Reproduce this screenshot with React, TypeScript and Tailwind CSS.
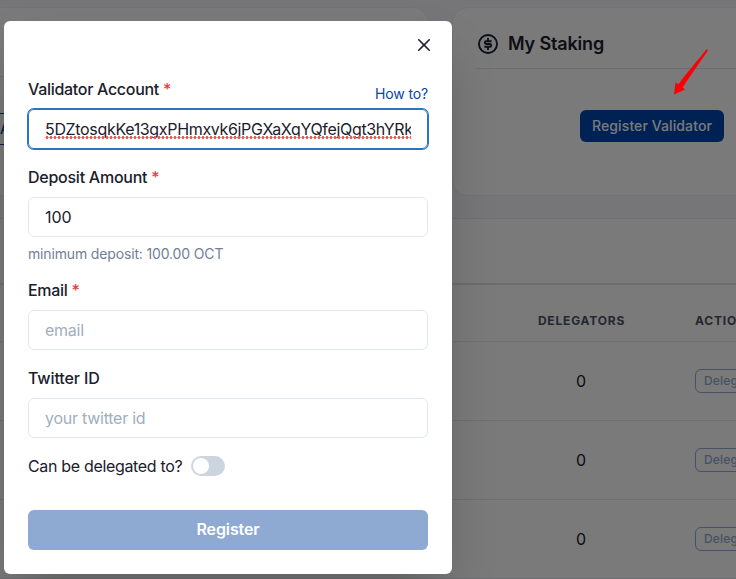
import React from "react";

function Asterisk() {
  return <span className="ml-1 text-[#e53e3e]">*</span>;
}

function CloseIcon() {
  return (
    <svg viewBox="0 0 24 24" className="size-3" fill="currentColor" aria-hidden="true">
      <path d="M.439,21.44a1.5,1.5,0,0,0,2.122,2.121L11.823,14.3a.25.25,0,0,1,.354,0l9.262,9.263a1.5,1.5,0,1,0,2.122-2.121L14.3,12.177a.25.25,0,0,1,0-.354l9.263-9.262A1.5,1.5,0,0,0,21.439.44L12.177,9.7a.25.25,0,0,1-.354,0L2.561.44A1.5,1.5,0,0,0,.439,2.561L9.7,11.823a.25.25,0,0,1,0,.354Z" />
    </svg>
  );
}

function DollarIcon() {
  return (
    <svg viewBox="0 0 24 24" className="size-6" fill="none" stroke="currentColor" strokeWidth="1.9" aria-hidden="true">
      <circle cx="12" cy="12" r="9" />
      <path d="M15.6 9.2H10.2a1.4 1.4 0 0 0 0 2.8h3.6a1.4 1.4 0 0 1 0 2.8H8.4M12 6v3M12 15v3" />
    </svg>
  );
}

function Page() {
  return (
    <div className="flex h-[579px] flex-col overflow-hidden bg-[#f6f7fc]">
      <div className="mt-[7px] flex h-[189px] shrink-0">
        <div className="w-[429px] shrink-0 rounded-r-2xl border border-l-0 border-[#edeff3] bg-white">
          <div className="h-[69px] border-b border-[#e8ebf0]" />
          <div className="mt-[36px] flex h-8 w-5 items-center overflow-hidden rounded-r border border-l-0 border-[#0845a5] text-sm font-medium text-[#0845a5]">
            A
          </div>
        </div>
        <div className="ml-[23px] w-[400px] shrink-0 rounded-2xl border border-[#edeff3] bg-white pl-[23px]">
          <div className="flex h-[61px] items-center gap-2 border-b border-[#e2e5ea] pt-[11px] text-[#1a202c]">
            <DollarIcon />
            <h2 className="text-lg font-semibold tracking-[-0.15px]">My Staking</h2>
          </div>
          <button className="mt-[41px] ml-[104px] flex h-8 w-36 items-center justify-center rounded-md bg-[#0045af] text-sm font-medium tracking-[0.1px] text-white">
            Register Validator
          </button>
        </div>
      </div>
      <div className="mt-[22px] w-[900px] shrink-0 border-t border-[#e8ebf2] bg-white">
        <div className="h-[66px] border-b-2 border-[#dfe2ec]" />
        <div className="flex h-[57px] items-center border-b border-[#e8ebf0] pt-4 text-xs font-bold tracking-[0.8px] text-[#4a5568]">
          <span className="ml-[531px] w-[101px] text-center">DELEGATORS</span>
          <span className="ml-[63px]">ACTION</span>
        </div>
        {[0, 1, 2].map((row) => (
          <div key={row} className="flex h-[79px] items-center border-b border-[#e8ebf0] text-[#1a202c]">
            <span className="ml-[531px] w-[100px] text-center">0</span>
            <span className="ml-[64px] flex h-6 w-[70px] items-center rounded-md border border-[#8faad6] px-2 text-xs font-medium tracking-[0.2px] text-[#8faad6]">
              Delegate
            </span>
          </div>
        ))}
      </div>
    </div>
  );
}

const inputBox = "flex h-10 items-center rounded-md border px-4";

function Dialog() {
  return (
    <div className="mt-[21px] ml-1 flex h-[553px] w-[448px] flex-col rounded-md bg-white px-6 text-[#1a202c] shadow-2xl">
      <button className="mt-2 -mr-3 flex size-8 items-center justify-center self-end" aria-label="Close">
        <CloseIcon />
      </button>
      <div className="mt-4 flex h-6 items-center justify-between">
        <label className="font-medium tracking-[-0.3px]">
          Validator Account
          <Asterisk />
        </label>
        <a className="mt-[10px] text-sm tracking-[-0.15px] text-[#0845a5]">How to?</a>
      </div>
      <div className={inputBox + " mt-2 border-[#2b74c2] shadow-[0_0_0_1px_#2b74c2]"}>
        <div className="relative -ml-px overflow-hidden whitespace-nowrap pl-px tracking-[-0.33px]">
          5DZtosqkKe13gxPHmxvk6jPGXaXqYQfejQgt3hYRkj
          <span className="absolute bottom-[2px] left-px h-[3px] w-full bg-[radial-gradient(circle,#ec5f5b_1.3px,transparent_1.8px)] bg-[length:4px_3px]" />
        </div>
      </div>
      <label className="mt-4 h-6 font-medium tracking-[-0.25px]">
        Deposit Amount
        <Asterisk />
      </label>
      <div className={inputBox + " mt-2 border-[#e2e8f0]"}>100</div>
      <p className="mt-2 h-[17px] text-sm leading-[18px] tracking-[-0.15px] text-[#718096]">minimum deposit: 100.00 OCT</p>
      <label className="mt-4 h-6 font-medium tracking-[-0.3px]">
        Email
        <Asterisk />
      </label>
      <div className={inputBox + " mt-2 border-[#e2e8f0] tracking-[-0.25px] text-[#a0aec0]"}>email</div>
      <label className="mt-4 h-6 font-medium tracking-[-0.1px]">Twitter ID</label>
      <div className={inputBox + " mt-2 border-[#e2e8f0] tracking-[-0.25px] text-[#a0aec0]"}>your twitter id</div>
      <div className="mt-4 flex h-6 items-center gap-2">
        <span className="w-[155px] whitespace-nowrap tracking-[-0.33px]">Can be delegated to?</span>
        <span className="flex h-5 w-[34px] items-center rounded-full bg-[#cbd5e0] p-0.5">
          <span className="size-4 rounded-full bg-white" />
        </span>
      </div>
      <button className="mt-8 flex h-10 shrink-0 items-center justify-center rounded-md bg-[#8eaad3] pb-0.5 font-semibold tracking-[-0.1px] text-white">
        Register
      </button>
    </div>
  );
}

export default function App() {
  return (
    <div className="relative h-[579px] w-[736px] overflow-hidden font-['Inter',sans-serif]">
      <Page />
      <div className="absolute inset-0 bg-black/52">
        <Dialog />
      </div>
      <svg className="absolute top-[48px] left-[672px] h-[48px] w-[38px]" viewBox="0 0 38 48" aria-hidden="true">
        <path d="M34.4 1.4 Q36 1 35.7 2.8 L14.6 33.5 L10.7 39.6 L13.2 41.4 L2 46.5 L3.6 34.2 L6.2 36.4 L12 28.7 Z" fill="#fb0007" />
      </svg>
    </div>
  );
}
